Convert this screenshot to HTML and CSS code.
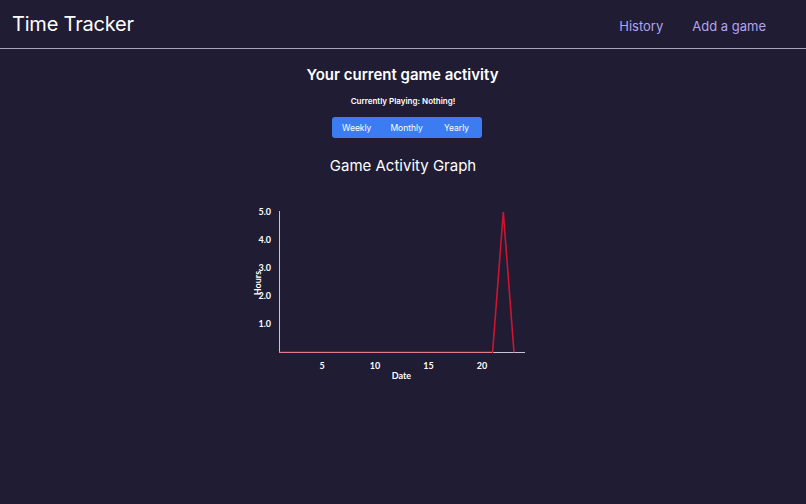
FILE: index.html
```html
<!DOCTYPE html>
<html lang="en">

<head>
    <meta charset="UTF-8">
    <meta name="viewport" content="width=device-width, initial-scale=1.0">
    <title>Time Tracker</title>
    <link rel="stylesheet" href="styles.css">
</head>

<body>
    <div class="header">
        <span class="brand">Time Tracker</span>
        <div class="nav">
            <a href="#">History</a>
            <a href="#">Add a game</a>
        </div>
    </div>
    <div class="main">
        <h2 class="activity-title">Your current game activity</h2>
        <div class="playing">Currently Playing: Nothing!</div>
        <div class="btn-group">
            <button class="btn">Weekly</button>
            <button class="btn">Monthly</button>
            <button class="btn">Yearly</button>
        </div>
        <h3 class="graph-title">Game Activity Graph</h3>
        <div class="chart">
            <svg width="300" height="190" viewBox="240 195 300 190">
                <!-- axes -->
                <line x1="279.5" y1="211" x2="279.5" y2="352.5" stroke="#c9c3d6" stroke-width="1" />
                <line x1="279" y1="352.5" x2="525" y2="352.5" stroke="#c9c3d6" stroke-width="1" />
                <!-- hours per day -->
                <polyline fill="none" stroke="#d0142f" stroke-width="1.6" stroke-linejoin="miter"
                    points="279.6,352.3 492.6,352.3 503.3,212 514,352.3" />
                <line x1="279" y1="352.5" x2="492" y2="352.5" stroke="#e07a8c" stroke-width="1" />
                <g class="tick-y" text-anchor="end">
                    <text x="271" y="215">5.0</text>
                    <text x="271" y="243">4.0</text>
                    <text x="271" y="271">3.0</text>
                    <text x="271" y="299">2.0</text>
                    <text x="271" y="327">1.0</text>
                </g>
                <g class="tick-x" text-anchor="middle">
                    <text x="322" y="369">5</text>
                    <text x="375" y="369">10</text>
                    <text x="428.5" y="369">15</text>
                    <text x="482" y="369">20</text>
                </g>
                <text class="axis-label" x="401.5" y="379" text-anchor="middle">Date</text>
                <text class="axis-label" x="261" y="283" text-anchor="middle" transform="rotate(-90 261 283)">Hours</text>
            </svg>
        </div>
    </div>
</body>

</html>
```

FILE: styles.css
```css
* {
    padding: 0;
    margin: 0;
    box-sizing: border-box;
}

body {
    background-color: #1f1c33;
    color: white;
    font-family: "Inter", "Liberation Sans", sans-serif;
    height: 504px;
}

.header {
    height: 49px;
    display: flex;
    align-items: center;
    justify-content: space-between;
    padding: 0 40px 0 12px;
    border-bottom: 1px solid #a9a3bd;
}

.brand {
    font-size: 20px;
    letter-spacing: -0.2px;
    margin-top: -1px;
}

.nav {
    display: flex;
    gap: 29px;
    margin-top: 3px;
}

.nav a {
    color: #b3a4ee;
    text-decoration: none;
    font-size: 13px;
}

.main {
    display: flex;
    flex-direction: column;
    align-items: center;
    padding-top: 16px;
}

.activity-title {
    font-size: 15px;
    font-weight: 600;
    margin-left: -1px;
}

.playing {
    font-size: 8px;
    font-weight: 600;
    margin-top: 12px;
}

.btn-group {
    display: flex;
    margin-top: 11px;
    height: 21px;
    background-color: #3b7cf2;
    border-radius: 3px;
    margin-left: 8px;
}

.btn {
    border: none;
    background: none;
    color: white;
    font-family: "Inter", "Liberation Sans", sans-serif;
    font-size: 8.5px;
    padding: 0 9px 0 10px;
}

.btn:nth-child(2) {
    padding: 0 10px;
}

.btn:last-child {
    padding: 0 13px 0 11px;
}

.graph-title {
    font-size: 15px;
    font-weight: 400;
    margin-top: 18px;
}

.chart {
    margin-top: 20px;
    margin-left: -26px;
}

.chart text {
    fill: white;
    font-family: "Lato", "Liberation Sans", sans-serif;
    font-weight: 700;
    font-size: 9px;
}

.chart .axis-label {
    font-size: 9px;
}
```
